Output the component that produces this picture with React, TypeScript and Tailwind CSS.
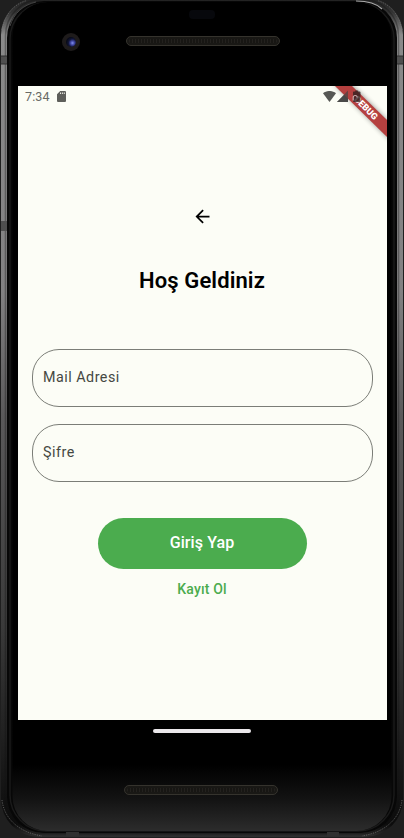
import React from "react";

function Bezel() {
  return (
    <svg className="absolute inset-0" width="404" height="838" viewBox="0 0 404 838" aria-hidden="true">
      <defs>
        <linearGradient id="metal" x1="0" y1="0" x2="0" y2="1">
          <stop offset="0" stopColor="#222" />
          <stop offset="0.018" stopColor="#333" />
          <stop offset="0.045" stopColor="#8a8a8a" />
          <stop offset="0.35" stopColor="#828182" />
          <stop offset="0.5" stopColor="#5a595a" />
          <stop offset="0.75" stopColor="#3a3a3a" />
          <stop offset="0.9" stopColor="#1c1c1c" />
          <stop offset="0.985" stopColor="#0c0c0c" />
          <stop offset="1" stopColor="#303030" />
        </linearGradient>
        <linearGradient id="glass" x1="0" y1="0" x2="0" y2="1">
          <stop offset="0" stopColor="#000" />
          <stop offset="0.92" stopColor="#000" />
          <stop offset="0.96" stopColor="#121212" />
          <stop offset="1" stopColor="#2c2c2c" />
        </linearGradient>
        <linearGradient id="topEdge" x1="0" y1="0" x2="1" y2="0">
          <stop offset="0" stopColor="#222" />
          <stop offset="0.15" stopColor="#7c8585" />
          <stop offset="1" stopColor="#8d9292" />
        </linearGradient>
        <linearGradient id="bottomEdge" x1="0" y1="0" x2="1" y2="0">
          <stop offset="0" stopColor="#777" />
          <stop offset="0.5" stopColor="#4a4a4a" />
          <stop offset="1" stopColor="#777" />
        </linearGradient>
      </defs>
      <rect width="404" height="838" fill="#1f1f1f" />
      <rect x="1" y="-3" width="402" height="840" rx="38" fill="url(#metal)" />
      <rect x="5.5" y="-0.5" width="393" height="834" rx="36" fill="none" stroke="#111" strokeOpacity="0.35" strokeWidth="1.5" />
      <path d="M2 30C5 14 14 4 27 .5M402 30C399 14 390 4 377 .5M2 800C4 818 18 832 42 836M402 800C400 818 386 832 362 836" fill="none" stroke="#777" strokeWidth="0.7" strokeDasharray="1.2 1.2" />
      <rect x="7" y="1" width="390" height="832" rx="37" fill="#070707" />
      <rect x="10" y="3" width="384" height="828" rx="36" fill="none" stroke="#1a1a1a" strokeWidth="1.5" />
      <rect x="12.5" y="2" width="379" height="829" rx="35" fill="url(#glass)" />
      <path d="M28 1H360" stroke="url(#topEdge)" strokeWidth="2" />
      <path d="M356 1C368 1 377 4 382 9" fill="none" stroke="#aaa" strokeWidth="1.2" />
      <path d="M10 26C14 13 23 5 36 2" fill="none" stroke="#444" strokeWidth="1" />
      <path d="M38 834.5H366" stroke="url(#bottomEdge)" strokeWidth="2.5" />
      <path d="M1 56h6v8H1zM397 56h6v8h-6zM1 221h6v10H1z" fill="#4f4f4f" />
      <path d="M1 56h6M397 56h6M1 64h6M397 64h6" stroke="#303030" />
      <path d="M66 832h13v4H66zM327 832h12v4h-12z" fill="#303030" />
    </svg>
  );
}

function Speaker() {
  return (
    <div className="h-[10px] w-[154px] rounded-full border border-[#35332d] bg-[#191815] p-[2px]">
      <div className="h-full w-full rounded-full bg-[repeating-linear-gradient(90deg,#23211e_0px,#23211e_1px,#171613_1px,#171613_3px)]" />
    </div>
  );
}

function StatusBar() {
  return (
    <div className="flex h-[22px] items-center justify-between pl-[7px] pr-[39px] text-[#696a66]">
      <div className="flex items-center gap-[7px]">
        <span className="text-[12.5px] leading-none tracking-[0.1px]">7:34</span>
        <svg className="mt-[-1px]" width="9" height="11" viewBox="0 0 9 11" fill="#5e5f5b">
          <path fillRule="evenodd" d="M3.2 0H8a1 1 0 0 1 1 1v9a1 1 0 0 1-1 1H1a1 1 0 0 1-1-1V3.2zM3 1.5v1.6h.9V1.5zm1.9 0v1.6h.9V1.5zm1.9 0v1.6h.9V1.5z" />
        </svg>
      </div>
      <div className="mt-[-2px] flex items-center gap-[1px]">
        <svg width="13" height="11" viewBox="0 0 13 11" fill="#575855">
          <path d="M0 2.3C3.8-.8 9.2-.8 13 2.3L6.5 11z" />
        </svg>
        <svg width="11" height="11" viewBox="0 0 11 11" fill="#575855">
          <path d="M11 0V11H0z" />
        </svg>
      </div>
    </div>
  );
}

function DebugBanner() {
  return (
    <svg className="absolute right-0 top-0" width="70" height="70" viewBox="0 0 70 70">
      <defs>
        <filter id="soft" x="-30%" y="-30%" width="160%" height="160%">
          <feGaussianBlur stdDeviation="2.5" />
        </filter>
      </defs>
      <path d="M16 -3L73 54V37L33 -3z" fill="#000" opacity="0.4" filter="url(#soft)" />
      <path d="M18 0L70 51V34L35 0z" fill="#b5403f" />
      <text x="49.2" y="25" transform="rotate(45 49.2 21.8)" textAnchor="middle" fill="#fff" className="font-['Roboto',sans-serif] text-[9px] font-black">DEBUG</text>
      <path d="M31 4.5V16H20z" fill="#444" opacity="0.7" />
      <path d="M36.5 5.5h1.7V4.5h3v1h1.3a1 1 0 0 1 1 1V15a1 1 0 0 1-1 1h-5.5a1 1 0 0 1-1-1V6.5a1 1 0 0 1 .5-1z" fill="#331f1f" opacity="0.8" />
      <path d="M36.2 14.5v-3a2 2 0 0 1 4 0" fill="none" stroke="#c9a9a9" strokeWidth="1.2" />
    </svg>
  );
}

function Field({ label }: { label: string }) {
  return (
    <div className="flex h-[58px] w-[341px] items-center rounded-[27px] border border-[#7b7d77] px-[10.5px] pb-px text-[14.3px] tracking-[0.5px] text-[#454842]">
      <span>{label}</span>
    </div>
  );
}

export default function App() {
  return (
    <div className="relative h-[838px] w-[404px] overflow-hidden font-['Roboto',sans-serif]">
      <Bezel />
      <div className="absolute left-[189px] top-[10px] h-[9px] w-[26px] rounded-[4px] bg-[#07080c]" />
      <div className="absolute left-[62px] top-[33px] flex h-[18px] w-[18px] items-center justify-center rounded-full bg-[#1e1b1b]">
        <div className="h-[10px] w-[10px] rounded-full bg-[radial-gradient(circle_at_65%_60%,#8392ee_0px,#4147a5_2px,#111638_4px,#080a18_6px)]" />
      </div>
      <div className="relative flex h-full flex-col">
        <div className="flex h-[86px] shrink-0 pl-[126px] pt-[36px]">
          <Speaker />
        </div>
        <main className="relative ml-[18px] flex h-[634px] w-[369px] shrink-0 flex-col overflow-hidden bg-[#fcfdf6]">
          <StatusBar />
          <DebugBanner />
          <div className="flex flex-col items-center pr-px pt-[98px]">
            <svg width="21" height="21" viewBox="0 0 24 24" fill="#000">
              <path d="M20 11H7.83l5.59-5.59L12 4l-8 8 8 8 1.41-1.41L7.83 13H20v-2z" />
            </svg>
            <h1 className="mt-[39px] text-[22px] font-semibold leading-[29px] tracking-[0.1px] text-black">Hoş Geldiniz</h1>
            <div className="mt-[54px] flex flex-col gap-[17px]">
              <Field label="Mail Adresi" />
              <Field label="Şifre" />
            </div>
            <button className="mt-[36px] h-[51px] w-[209px] rounded-full bg-[#4bac4e] pb-px text-[16px] font-medium tracking-[0.1px] text-white">
              Giriş Yap
            </button>
            <button className="mt-[10px] text-[14px] font-medium leading-[20px] tracking-[0.15px] text-[#4bac4e]">Kayıt Ol</button>
          </div>
        </main>
        <div className="flex shrink-0 flex-col pl-[124px] pt-[9px]">
          <div className="ml-[29px] h-[4px] w-[98px] rounded-full bg-[#ebe8eb]" />
          <div className="mt-[52px]">
            <Speaker />
          </div>
        </div>
      </div>
    </div>
  );
}
